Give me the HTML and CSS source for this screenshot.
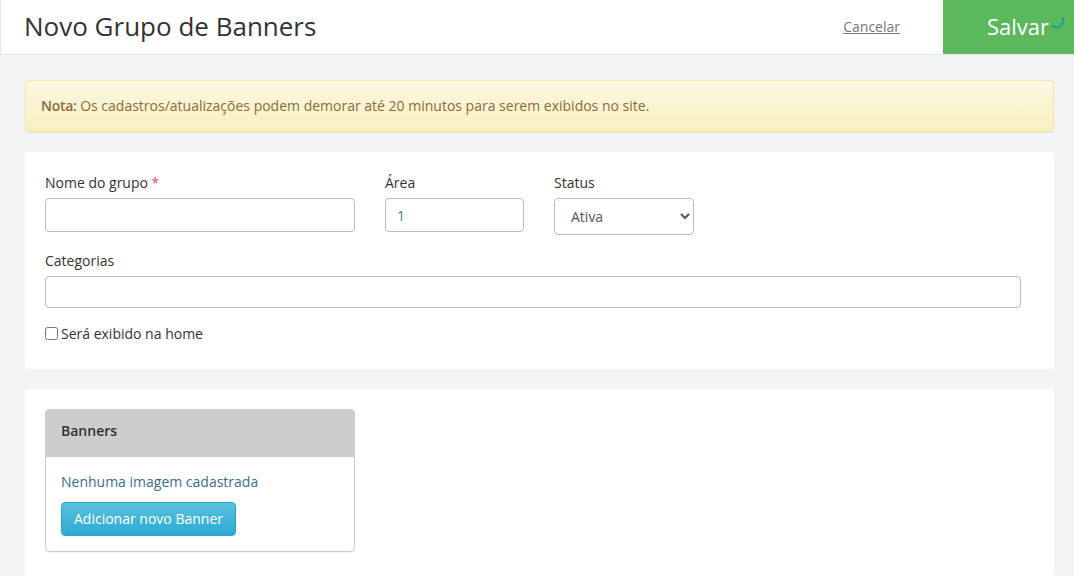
FILE: index.html
```html
<!DOCTYPE html>
<html lang="pt-BR">
<head>
<meta charset="utf-8">
<title>Novo Grupo de Banners</title>
<link rel="stylesheet" href="styles.css">
</head>
<body>
<header class="topbar">
  <h1 class="title">Novo Grupo de Banners</h1>
  <a class="cancel" href="#">Cancelar</a>
  <button class="save" type="button">Salvar<svg class="spinner" width="16" height="14" viewBox="0 0 16 14"><path d="M13.3 1.5C13.9 6 11 11.5 6.5 11.5C4.8 11.5 3.3 10.7 2 9.5" fill="none" stroke="#14a39a" stroke-width="2"/></svg></button>
</header>
<main class="content">
  <div class="alert"><strong class="note">Nota:</strong> Os cadastros/atualizações podem demorar até 20 minutos para serem exibidos no site.</div>
  <section class="card form-card">
    <div class="row">
      <div class="field field-name">
        <label class="label">Nome do grupo <span class="req">*</span></label>
        <input class="input input-name" type="text">
      </div>
      <div class="field field-area">
        <label class="label">Área</label>
        <input class="input input-name" type="text" value="1">
      </div>
      <div class="field field-status">
        <label class="label">Status</label>
        <select class="select"><option>Ativa</option></select>
      </div>
    </div>
    <div class="field field-cat">
      <label class="label">Categorias</label>
      <input class="input input-cat" type="text">
    </div>
    <label class="check"><input class="checkbox" type="checkbox">Será exibido na home</label>
  </section>
  <section class="card banners-card">
    <div class="panel">
      <div class="panel-head">Banners</div>
      <div class="panel-body">
        <p class="empty">Nenhuma imagem cadastrada</p>
        <button class="add" type="button">Adicionar novo Banner</button>
      </div>
    </div>
  </section>
</main>
</body>
</html>
```
FILE: styles.css
```css
* { box-sizing: border-box; }
html, body { height: 100%; }
body {
  margin: 0;
  background: #f3f4f6;
  font-family: "Open Sans", sans-serif;
  font-size: 14px;
  color: #333;
  overflow: hidden;
}
.topbar {
  height: 55px;
  background: #fff;
  border-bottom: 1px solid #e7e7e7;
  border-left: 1px solid #e7e7e7;
  display: flex;
  align-items: flex-start;
  padding-left: 23px;
}
.title {
  margin: 0;
  font-size: 26px;
  font-weight: 400;
  line-height: 52px;
  color: #333;
  flex: 1;
}
.cancel {
  font-size: 14px;
  line-height: 54px;
  color: #777;
  margin-right: 43px;
}
.save {
  position: relative;
  width: 131px;
  height: 54px;
  border: 0;
  padding: 0 0 2px 19px;
  background: #5cb85c;
  color: #fff;
  font-family: inherit;
  font-size: 22px;
}
.spinner { position: absolute; left: 107px; top: 16px; }
.content { padding: 25px 20px 0 25px; }
.alert {
  height: 52px;
  padding: 0 15px;
  line-height: 50px;
  border: 1px solid #f5e79e;
  border-radius: 4px;
  background: linear-gradient(#fcf8e3, #f8efc0);
  color: #8a6d3b;
  box-shadow: 0 1px 2px rgba(0,0,0,.06);
  margin-bottom: 20px;
}
.note { font-weight: 600; letter-spacing: -0.3px; }
.card { background: #fff; border-radius: 4px; }
.form-card { height: 217px; padding: 20px; margin-bottom: 20px; }
.row { display: flex; gap: 30px; height: 70px; }
.field { display: flex; flex-direction: column; align-items: flex-start; }
.field-name { width: 310px; }
.field-area { width: 139px; }
.field-status { width: 140px; }
.field-cat { width: 976px; margin-top: 8px; }
.label { font-size: 14px; line-height: 22px; margin-bottom: 5px; color: #333; height: 21px; }
.req { color: #e74c5c; }
.input {
  display: block;
  width: 100%;
  border: 1px solid #bbb;
  border-radius: 4px;
  padding: 0 11px;
  font-family: inherit;
  font-size: 14px;
  color: #3f7ba3;
  background: #fff;
}
.input-name { height: 34px; }
.input-cat { height: 32px; }
.select {
  width: 100%;
  height: 37px;
  border: 1px solid #bbb;
  border-radius: 4px;
  padding: 0 12px;
  font-family: inherit;
  font-size: 14px;
  color: #555;
  background: #fff;
}
.check { display: flex; align-items: center; margin-top: 16px; height: 20px; line-height: 20px; }
.checkbox { width: 13px; height: 13px; margin: 0 3px 0 0; position: relative; top: -1px; }
.banners-card { height: 187px; padding: 20px; }
.panel {
  width: 310px;
  height: 143px;
  border: 1px solid #ccc;
  border-radius: 4px;
  box-shadow: 0 1px 1px rgba(0,0,0,.05);
  overflow: hidden;
}
.panel-head {
  height: 47px;
  background: #cdcdcd;
  padding-left: 15px;
  line-height: 41px;
  font-weight: 600;
  color: #333;
}
.panel-body { padding: 15px; }
.empty { margin: 0 0 10px; line-height: 20px; color: #3b6f8c; }
.add {
  display: block;
  width: 175px;
  height: 34px;
  border: 1px solid #28a4c9;
  border-radius: 4px;
  background: linear-gradient(#5bc0de, #2aabd2);
  color: #fff;
  font-family: inherit;
  font-size: 14px;
  padding: 0 0 2px;
}
```
